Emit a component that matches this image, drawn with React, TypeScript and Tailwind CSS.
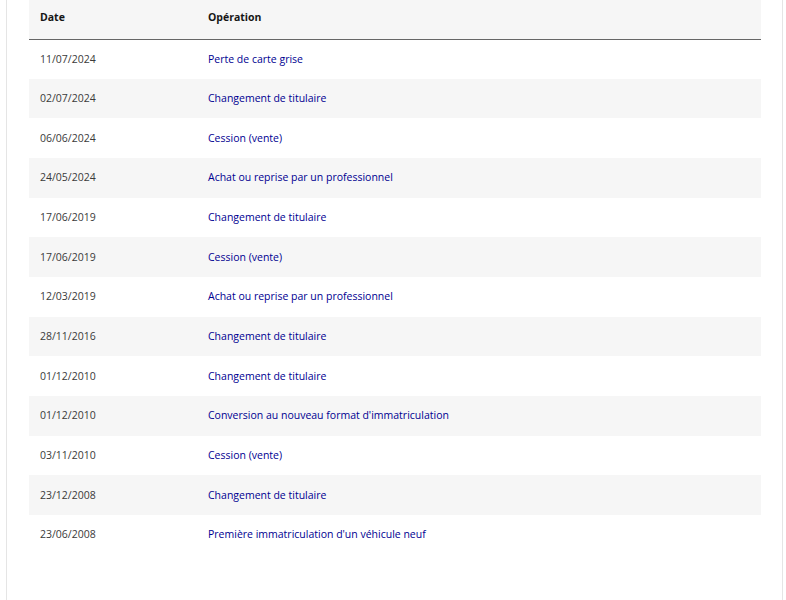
const rows: [string, string][] = [
  ["11/07/2024", "Perte de carte grise"],
  ["02/07/2024", "Changement de titulaire"],
  ["06/06/2024", "Cession (vente)"],
  ["24/05/2024", "Achat ou reprise par un professionnel"],
  ["17/06/2019", "Changement de titulaire"],
  ["17/06/2019", "Cession (vente)"],
  ["12/03/2019", "Achat ou reprise par un professionnel"],
  ["28/11/2016", "Changement de titulaire"],
  ["01/12/2010", "Changement de titulaire"],
  ["01/12/2010", "Conversion au nouveau format d'immatriculation"],
  ["03/11/2010", "Cession (vente)"],
  ["23/12/2008", "Changement de titulaire"],
  ["23/06/2008", "Première immatriculation d'un véhicule neuf"],
];

export default function App() {
  return (
    <div className="h-[600px] overflow-hidden bg-white pl-[6px] pr-[3px] font-['Open_Sans',sans-serif]">
      <div className="h-[640px] border-x border-[#e5e5e5] pl-[22px] pr-[21px]">
        <table className="w-full border-collapse text-left text-[10.5px]">
          <thead>
            <tr className="h-[39px] border-b border-[#666] bg-[#f6f6f6]">
              <th className="w-[179px] pb-[3px] pl-[11px] font-bold text-[#161616]">Date</th>
              <th className="pb-[3px] font-bold text-[#161616]">Opération</th>
            </tr>
          </thead>
          <tbody>
            {rows.map(([date, op], i) => (
              <tr key={i} className={`h-[39.67px] ${i % 2 === 1 ? "bg-[#f6f6f6]" : "bg-white"}`}>
                <td className="pt-[1px] pl-[11px] text-[#3a3a3a]">{date}</td>
                <td className="pt-[1px]">
                  <a href="#" className="text-[#000091]">
                    {op}
                  </a>
                </td>
              </tr>
            ))}
          </tbody>
        </table>
      </div>
    </div>
  );
}
